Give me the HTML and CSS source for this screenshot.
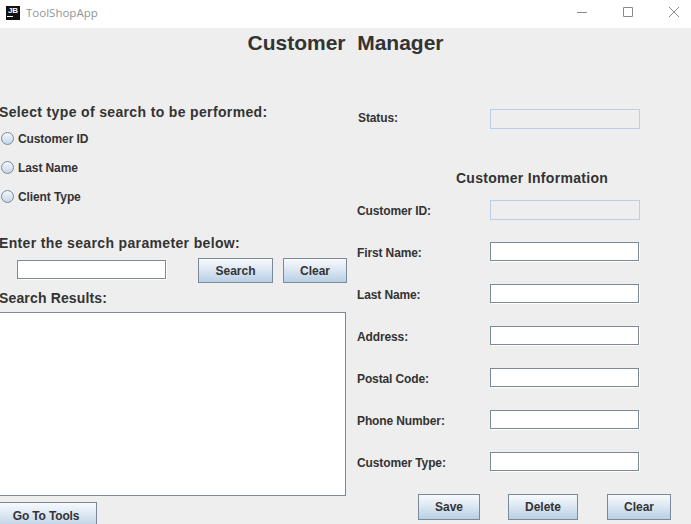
FILE: index.html
```html
<!DOCTYPE html>
<html lang="en">
<head>
  <meta charset="UTF-8">
  <title>ToolShopApp</title>
  <link rel="stylesheet" href="styles.css">
</head>
<body>

  <header class="titlebar">
    <div class="app-icon"><span class="app-icon-text">JB</span><span class="app-icon-bar"></span></div>
    <span class="app-name">ToolShopApp</span>
    <div class="window-controls">
      <svg class="win-icon" viewBox="0 0 12 12"><path d="M1 6.5H11" /></svg>
      <svg class="win-icon" viewBox="0 0 12 12"><path d="M1.5 1.5H10.5V10.5H1.5Z" /></svg>
      <svg class="win-icon" viewBox="0 0 12 12"><path d="M1 1L11 11M11 1L1 11" /></svg>
    </div>
  </header>

  <main class="frame">
    <h1 class="page-title">Customer  Manager</h1>

    <div class="columns">
      <section class="search-panel">
        <h2 class="section-label first">Select type of search to be performed:</h2>
        <div class="radio-group">
          <label class="radio-row"><span class="radio"></span>Customer ID</label>
          <label class="radio-row"><span class="radio"></span>Last Name</label>
          <label class="radio-row"><span class="radio"></span>Client Type</label>
        </div>

        <h2 class="section-label param">Enter the search parameter below:</h2>
        <div class="search-row">
          <input class="field search-field" type="text">
          <button class="btn btn-search">Search</button>
          <button class="btn btn-clear-search">Clear</button>
        </div>

        <h2 class="section-label results">Search Results:</h2>
        <div class="results-box"></div>
        <button class="btn btn-tools">Go To Tools</button>
      </section>

      <section class="info-panel">
        <div class="form-row status-row">
          <span class="form-label">Status:</span>
          <input class="field field-off" type="text" disabled>
        </div>

        <h2 class="info-title">Customer Information</h2>

        <div class="form-row id-row">
          <span class="form-label">Customer ID:</span>
          <input class="field field-off" type="text" disabled>
        </div>
        <div class="form-row">
          <span class="form-label">First Name:</span>
          <input class="field" type="text">
        </div>
        <div class="form-row">
          <span class="form-label">Last Name:</span>
          <input class="field" type="text">
        </div>
        <div class="form-row">
          <span class="form-label">Address:</span>
          <input class="field" type="text">
        </div>
        <div class="form-row">
          <span class="form-label">Postal Code:</span>
          <input class="field" type="text">
        </div>
        <div class="form-row">
          <span class="form-label">Phone Number:</span>
          <input class="field" type="text">
        </div>
        <div class="form-row">
          <span class="form-label">Customer Type:</span>
          <input class="field" type="text">
        </div>

        <div class="actions">
          <button class="btn btn-save">Save</button>
          <button class="btn btn-delete">Delete</button>
          <button class="btn btn-clear">Clear</button>
        </div>
      </section>
    </div>
  </main>

</body>
</html>
```

FILE: styles.css
```css
html, body {
  margin: 0;
  height: 524px;
  overflow: hidden;
}
body {
  background: #eeeeee;
  color: #333333;
  font-family: "Liberation Sans", Arial, sans-serif;
  font-size: 12px;
  font-weight: bold;
}
h1, h2 {
  margin: 0;
}

/* title bar */
.titlebar {
  height: 28px;
  background: #ffffff;
  display: flex;
  align-items: center;
  padding-left: 6px;
  box-sizing: border-box;
}
.app-icon {
  width: 14px;
  height: 14px;
  margin-top: -3px;
  background: #111111;
  color: #ffffff;
  display: flex;
  flex-direction: column;
  align-items: center;
  overflow: hidden;
}
.app-icon-text {
  font-size: 8px;
  line-height: 9px;
  margin-top: 0;
}
.app-icon-bar {
  width: 6px;
  height: 1px;
  margin: 1px 0 0 -6px;
  background: #ffffff;
}
.app-name {
  margin-left: 6px;
  margin-top: -3px;
  font-family: "Open Sans", sans-serif;
  font-weight: normal;
  font-size: 11.5px;
  color: #8f959c;
}
.window-controls {
  margin-left: auto;
  margin-right: 11px;
  margin-top: -4px;
  display: flex;
  gap: 34px;
}
.win-icon {
  width: 12px;
  height: 12px;
  fill: none;
  stroke: #8a8a8a;
  stroke-width: 1;
}

/* main frame */
.frame {
  height: 496px;
}
.page-title {
  height: 30px;
  line-height: 30px;
  text-align: center;
  font-size: 21px;
  white-space: pre;
}
.columns {
  display: flex;
}

/* left side */
.search-panel {
  width: 347px;
  flex: none;
  display: flex;
  flex-direction: column;
}
.section-label {
  font-size: 14px;
  line-height: 16px;
  height: 16px;
  margin-left: -1px;
  letter-spacing: 0.35px;
  white-space: nowrap;
}
.section-label.first {
  margin-top: 46px;
}
.section-label.param {
  margin-top: 28px;
}
.section-label.results {
  margin-top: 7px;
  letter-spacing: 0.15px;
}
.radio-group {
  margin-top: 9px;
  display: flex;
  flex-direction: column;
  gap: 9px;
}
.radio-row {
  height: 20px;
  display: flex;
  align-items: center;
  padding-left: 1px;
  letter-spacing: -0.1px;
}
.radio {
  width: 11px;
  height: 11px;
  margin-right: 4px;
  margin-bottom: 2px;
  border: 1px solid #7a8a99;
  border-radius: 50%;
  background: linear-gradient(#f4f7fa, #c4d6e8);
}
.search-row {
  margin-top: 7px;
  height: 25px;
  display: flex;
  align-items: center;
  padding-left: 17px;
}
.results-box {
  margin-top: 6px;
  margin-left: -2px;
  height: 184px;
  width: 348px;
  box-sizing: border-box;
  background: #ffffff;
  border: 1px solid #7a8a99;
}

/* inputs */
.field {
  width: 149px;
  height: 19px;
  box-sizing: border-box;
  padding: 0;
  margin: 0;
  background: #ffffff;
  border: 1px solid #7a8a99;
  box-shadow: 1px 1px 0 #ffffff;
  border-radius: 0;
  outline: none;
}
.field-off {
  width: 150px;
  height: 20px;
  background: #eeeeee;
  border-color: #b8cfe5;
  box-shadow: none;
}
.search-field {
  margin-bottom: 2px;
}

/* buttons */
.btn {
  height: 25px;
  padding: 0;
  box-sizing: border-box;
  border: 1px solid #7a8a99;
  border-radius: 0;
  background: linear-gradient(#f7fafc 0%, #dde8f3 45%, #b8cfe5 100%);
  color: #333333;
  font-family: inherit;
  font-size: 12px;
  font-weight: bold;
}
.btn-search {
  width: 75px;
  margin-left: 32px;
}
.btn-clear-search {
  width: 64px;
  margin-left: 10px;
}
.btn-tools {
  width: 102px;
  height: 27px;
  margin-top: 6px;
  margin-left: -5px;
  letter-spacing: -0.15px;
}
.btn-save {
  width: 62px;
  height: 26px;
}
.btn-delete {
  width: 70px;
  height: 26px;
  margin-left: 28px;
}
.btn-clear {
  width: 64px;
  height: 26px;
  margin-left: 29px;
}

/* right side */
.info-panel {
  padding-left: 10px;
  display: flex;
  flex-direction: column;
}
.form-row {
  display: flex;
  align-items: center;
  height: 19px;
  margin-top: 23px;
}
.form-label {
  width: 133px;
  flex: none;
  position: relative;
  top: 1px;
  letter-spacing: -0.12px;
}
.status-row {
  margin-top: 51px;
  height: 20px;
}
.status-row .form-label {
  top: -1px;
  padding-left: 1px;
  width: 132px;
}
.id-row {
  margin-top: 14px;
  height: 20px;
  margin-bottom: -1px;
}
.info-title {
  margin-top: 41px;
  height: 16px;
  line-height: 16px;
  width: 350px;
  text-align: center;
  font-size: 14px;
  letter-spacing: 0.3px;
}
.actions {
  margin-top: 23px;
  padding-left: 61px;
  display: flex;
}
```
